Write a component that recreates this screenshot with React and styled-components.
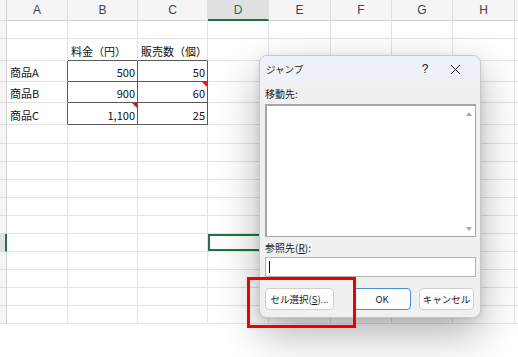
import styled, { createGlobalStyle } from "styled-components";

const GlobalStyle = createGlobalStyle`
  html, body {
    margin: 0;
    padding: 0;
    background: #ffffff;
  }
  body {
    font-family: "Noto Sans CJK JP", "Liberation Sans", sans-serif;
    overflow: hidden;
  }
`;

const COLS = [7, 61, 70, 70, 61, 62, 61, 61, 62, 20];
const HEADERS = ["", "A", "B", "C", "D", "E", "F", "G", "H", ""];
const ROWS = [18, 22, 21, 21, 22, 19, 18, 18, 18, 18, 18, 18, 18, 18, 18, 18];
const SELECTED_ROW = 11;
const SELECTED_COL = 4;

const Sheet = styled.div`
  position: relative;
  width: 518px;
  height: 357px;
  overflow: hidden;
  background: #ffffff;
`;

const Grid = styled.div`
  display: grid;
  grid-template-columns: ${COLS.map((c) => c + "px").join(" ")};
  grid-template-rows: 21px ${ROWS.map((r) => r + "px").join(" ")};
`;

const ColHead = styled.div`
  box-sizing: border-box;
  display: flex;
  align-items: center;
  justify-content: center;
  background: ${(p) => (p.$active ? "#e1e1e1" : "#f5f5f5")};
  border-right: 1px solid #dedede;
  border-bottom: ${(p) => (p.$active ? "2px solid #217346" : "1px solid #d2d2d2")};
  font-family: "Liberation Sans", "Noto Sans", sans-serif;
  font-size: 12px;
  color: ${(p) => (p.$active ? "#217346" : "#444444")};
`;

const RowHead = styled.div`
  box-sizing: border-box;
  background: ${(p) => (p.$active ? "#e1e1e1" : "#f5f5f5")};
  border-right: ${(p) => (p.$active ? "2px solid #217346" : "1px solid #d2d2d2")};
  border-bottom: 1px solid #dedede;
`;

const Cell = styled.div`
  position: relative;
  box-sizing: border-box;
  display: flex;
  align-items: flex-end;
  justify-content: ${(p) => (p.$num ? "flex-end" : "flex-start")};
  padding: 0 2px 1px 3px;
  border-right: 1px solid ${(p) => (p.$darkRight ? "#5a5a5a" : "#e2e2e2")};
  border-bottom: 1px solid ${(p) => (p.$darkBottom ? "#5a5a5a" : "#e2e2e2")};
  font-size: 11px;
  line-height: 15px;
  color: #111111;
  white-space: nowrap;
  box-shadow: ${(p) => (p.$selected ? "inset 0 0 0 2px #217346" : "none")};
`;

const CommentMark = styled.span`
  position: absolute;
  top: 0;
  right: 0;
  width: 0;
  height: 0;
  border-top: 5px solid #e81123;
  border-left: 5px solid transparent;
`;

const Dialog = styled.div`
  position: absolute;
  left: 259px;
  top: 55px;
  width: 222px;
  height: 263px;
  box-sizing: border-box;
  display: flex;
  flex-direction: column;
  background: #f0f0f0;
  border: 1px solid #c9c9c9;
  border-radius: 8px;
  overflow: hidden;
  box-shadow: 0 16px 42px rgba(0, 0, 0, 0.3), 0 2px 6px rgba(0, 0, 0, 0.1);
`;

const TitleBar = styled.div`
  height: 26px;
  display: flex;
  align-items: center;
  padding: 0 10px 0 6px;
  background: #eef2f8;
  font-size: 9.5px;
  color: #222222;
`;

const Title = styled.span`
  flex: 1;
`;

const TitleButton = styled.span`
  width: 30px;
  display: flex;
  justify-content: center;
  align-items: center;
  font-family: "Liberation Sans", sans-serif;
  font-size: 12px;
  color: #222222;
`;

const Body = styled.div`
  flex: 1;
  display: flex;
  flex-direction: column;
  padding: 0 4px 0 5px;
`;

const Label = styled.div`
  height: ${(p) => p.$h}px;
  display: flex;
  align-items: center;
  font-size: 10px;
  color: #1a1a1a;
`;

const ListBox = styled.div`
  height: 133px;
  box-sizing: border-box;
  display: flex;
  justify-content: flex-end;
  background: #ffffff;
  border: 1px solid #a6a6a6;
  border-top-width: 2px;
  border-left-width: 2px;
`;

const ScrollBar = styled.div`
  width: 13px;
  display: flex;
  flex-direction: column;
  justify-content: space-between;
  align-items: center;
  padding: 6px 0 5px;
`;

const Arrow = styled.span`
  width: 0;
  height: 0;
  border-left: 3.5px solid transparent;
  border-right: 3.5px solid transparent;
  ${(p) =>
    p.$down
      ? "border-top: 4px solid #a8a8a8;"
      : "border-bottom: 4px solid #a8a8a8;"}
`;

const TextInput = styled.div`
  height: 20px;
  box-sizing: border-box;
  display: flex;
  align-items: center;
  padding-left: 3px;
  background: #ffffff;
  border: 1px solid #b4b4b4;
`;

const Caret = styled.span`
  width: 1px;
  height: 12px;
  background: #111111;
`;

const ButtonRow = styled.div`
  display: flex;
  align-items: center;
  gap: 8px;
  margin-top: 11px;
  padding-right: 1px;
`;

const Button = styled.div`
  width: ${(p) => p.$w}px;
  height: 22px;
  box-sizing: border-box;
  display: flex;
  align-items: center;
  justify-content: center;
  background: #fdfdfd;
  border: 1px solid ${(p) => (p.$primary ? "#4a8fd6" : "#d0d0d0")};
  border-radius: 4px;
  font-size: 9.5px;
  color: #1a1a1a;
  white-space: nowrap;
  margin-right: ${(p) => p.$gap || 0}px;
`;

const U = styled.span`
  text-decoration: underline;
`;

const Highlight = styled.div`
  position: absolute;
  left: 247px;
  top: 277px;
  width: 109px;
  height: 51px;
  box-sizing: border-box;
  border: 3px solid #ee0000;
`;

const DATA = {
  "1-2": { text: "料金（円）", darkBottom: true },
  "1-3": { text: "販売数（個）", darkBottom: true },
  "2-1": { text: "商品A", darkRight: true },
  "2-2": { text: "500", num: true, darkRight: true, darkBottom: true },
  "2-3": { text: "50", num: true, darkRight: true, darkBottom: true },
  "3-1": { text: "商品B", darkRight: true },
  "3-2": { text: "900", num: true, darkRight: true, darkBottom: true },
  "3-3": { text: "60", num: true, darkRight: true, darkBottom: true, comment: true },
  "4-1": { text: "商品C", darkRight: true },
  "4-2": { text: "1,100", num: true, darkRight: true, darkBottom: true, comment: true },
  "4-3": { text: "25", num: true, darkRight: true, darkBottom: true },
};

const App = () => {
  return (
    <>
      <GlobalStyle />
      <Sheet>
        <Grid>
          {COLS.map((_, c) =>
            c === 0 ? (
              <RowHead key={"h" + c} />
            ) : (
              <ColHead key={"h" + c} $active={c === SELECTED_COL}>
                {HEADERS[c]}
              </ColHead>
            )
          )}
          {ROWS.map((_, r) =>
            COLS.map((_, c) => {
              if (c === 0) {
                return <RowHead key={r + "-" + c} $active={r === SELECTED_ROW} />;
              }
              const d = DATA[r + "-" + c] || {};
              return (
                <Cell
                  key={r + "-" + c}
                  $num={d.num}
                  $darkRight={d.darkRight}
                  $darkBottom={d.darkBottom}
                  $selected={r === SELECTED_ROW && c === SELECTED_COL}
                >
                  {d.text}
                  {d.comment && <CommentMark />}
                </Cell>
              );
            })
          )}
        </Grid>

        <Dialog>
          <TitleBar>
            <Title>ジャンプ</Title>
            <TitleButton>?</TitleButton>
            <TitleButton>
              <svg width="11" height="11" viewBox="0 0 11 11">
                <path d="M1 1L10 10M10 1L1 10" stroke="#222" strokeWidth="1" />
              </svg>
            </TitleButton>
          </TitleBar>
          <Body>
            <Label $h={22}>移動先:</Label>
            <ListBox>
              <ScrollBar>
                <Arrow />
                <Arrow $down />
              </ScrollBar>
            </ListBox>
            <Label $h={20}>
              参照先(<U>R</U>):
            </Label>
            <TextInput>
              <Caret />
            </TextInput>
            <ButtonRow>
              <Button $w={69} $gap={11}>
                セル選択(<U>S</U>)...
              </Button>
              <Button $w={58} $primary>
                OK
              </Button>
              <Button $w={55}>キャンセル</Button>
            </ButtonRow>
          </Body>
        </Dialog>

        <Highlight />
      </Sheet>
    </>
  );
};

export default App;
